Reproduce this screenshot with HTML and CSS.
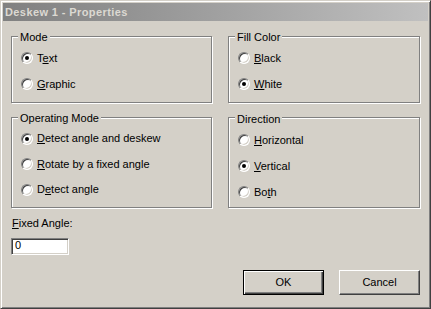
FILE: index.html
```html
<!DOCTYPE html>
<html lang="en">
  <head>
    <meta charset="UTF-8" />
    <title>Deskew 1 - Properties</title>
    <link rel="stylesheet" href="styles.css">
  </head>
  <body>
    <div class="window">
      <div class="titlebar">Deskew 1 - Properties</div>
      <div class="dialog">
        <div class="groups">
          <div class="group mode">
            <div class="group-title">Mode</div>
            <div class="option"><span class="radio checked"></span><span>T<u>e</u>xt</span></div>
            <div class="option"><span class="radio"></span><span><u>G</u>raphic</span></div>
          </div>
          <div class="group fill">
            <div class="group-title">Fill Color</div>
            <div class="option"><span class="radio"></span><span><u>B</u>lack</span></div>
            <div class="option"><span class="radio checked"></span><span><u>W</u>hite</span></div>
          </div>
          <div class="group operating">
            <div class="group-title">Operating Mode</div>
            <div class="option"><span class="radio checked"></span><span><u>D</u>etect angle and deskew</span></div>
            <div class="option"><span class="radio"></span><span><u>R</u>otate by a fixed angle</span></div>
            <div class="option"><span class="radio"></span><span>D<u>e</u>tect angle</span></div>
          </div>
          <div class="group direction">
            <div class="group-title">Direction</div>
            <div class="option"><span class="radio"></span><span><u>H</u>orizontal</span></div>
            <div class="option"><span class="radio checked"></span><span><u>V</u>ertical</span></div>
            <div class="option"><span class="radio"></span><span>Bo<u>t</u>h</span></div>
          </div>
        </div>

        <div class="angle">
          <div class="angle-label"><u>F</u>ixed Angle:</div>
          <div class="field">0</div>
        </div>

        <div class="actions">
          <div class="btn default">OK</div>
          <div class="btn">Cancel</div>
        </div>
      </div>
    </div>
  </body>
</html>
```

FILE: styles.css
```css
* {
  box-sizing: border-box;
}
body {
  margin: 0;
  background-color: #d4d0c8;
  font-family: "Liberation Sans", Arial, sans-serif;
  font-size: 11px;
  line-height: 13px;
  color: #000;
}
.window {
  width: 431px;
  height: 309px;
  padding: 2px;
  background-color: #d4d0c8;
  border: 1px solid;
  border-color: #d4d0c8 #404040 #404040 #d4d0c8;
  box-shadow: inset 1px 1px #fff, inset -1px -1px #808080;
}
.titlebar {
  height: 18px;
  line-height: 18px;
  padding-left: 2px;
  font-weight: bold;
  letter-spacing: 0.4px;
  color: #dcd9d2;
  background: linear-gradient(to right, #808080, #c0c0c0);
}
.dialog {
  padding: 15px 8px 0 8px;
}
.groups {
  display: grid;
  grid-template-columns: 201px 1fr;
  column-gap: 16px;
  row-gap: 14px;
}
/* etched frame: grey line with a white one beside it */
.group {
  border: 1px solid #808080;
  box-shadow: inset 1px 1px #fff, 1px 1px #fff;
  padding: 0 9px;
}
.mode,
.fill {
  height: 67px;
}
.operating,
.direction {
  height: 91px;
}
.direction {
  padding-top: 1px;
}
.group-title {
  width: fit-content;
  margin: -6px 0 1px -3px;
  padding: 0 2px;
  background-color: #d4d0c8;
}
.option {
  display: flex;
  align-items: center;
  gap: 4px;
  height: 26px;
}
.operating .option {
  height: 25.5px;
}
.radio {
  position: relative;
  width: 12px;
  height: 12px;
  border-radius: 50%;
  background-color: #fff;
  border: 1px solid;
  border-color: #808080 #fff #fff #808080;
  box-shadow: inset 1px 1px #404040, inset -1px -1px #d4d0c8;
}
.radio.checked::after {
  content: "";
  position: absolute;
  left: 3px;
  top: 3px;
  width: 4px;
  height: 4px;
  border-radius: 50%;
  background-color: #000;
}
.angle {
  margin-top: 9px;
}
.angle-label {
  margin-left: 1px;
}
.field {
  width: 58px;
  height: 17px;
  margin-top: 8px;
  padding-left: 3px;
  line-height: 13px;
  background-color: #fff;
  border: 1px solid;
  border-color: #808080 #fff #fff #808080;
  box-shadow: inset 1px 1px #404040, inset -1px -1px #d4d0c8;
}
.actions {
  display: flex;
  justify-content: flex-end;
  gap: 15px;
  margin-top: 15px;
}
.btn {
  width: 81px;
  height: 25px;
  display: flex;
  align-items: center;
  justify-content: center;
  background-color: #d4d0c8;
  border: 1px solid;
  border-color: #fff #404040 #404040 #fff;
  box-shadow: inset -1px -1px #808080;
}
.btn.default {
  border-color: #000;
  box-shadow: inset 1px 1px #fff, inset -1px -1px #404040, inset -2px -2px #808080;
}
```
